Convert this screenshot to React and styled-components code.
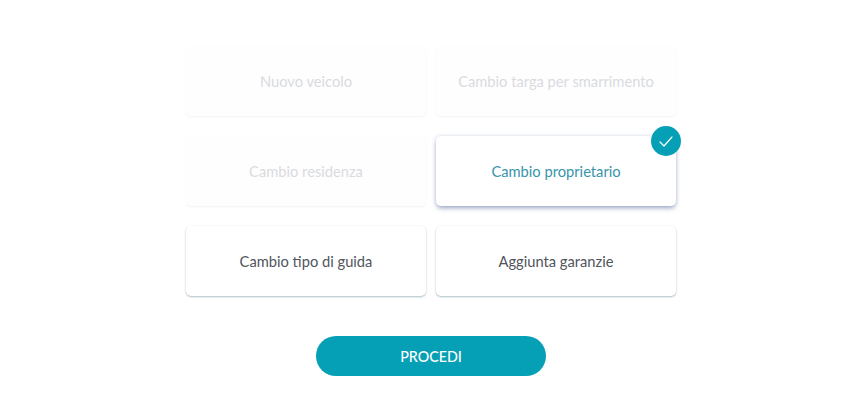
import React from "react";
import styled, { createGlobalStyle } from "styled-components";

const GlobalStyle = createGlobalStyle`
  html, body {
    margin: 0;
    padding: 0;
    background: #fff;
    font-family: Lato, "Open Sans", sans-serif;
  }
`;

const options = [
  { label: "Nuovo veicolo", state: "disabled" },
  { label: "Cambio targa per smarrimento", state: "disabled" },
  { label: "Cambio residenza", state: "disabled" },
  { label: "Cambio proprietario", state: "selected" },
  { label: "Cambio tipo di guida", state: "default" },
  { label: "Aggiunta garanzie", state: "default" },
];

const App = () => {
  return (
    <>
      <GlobalStyle />
      <Page>
        <Grid>
          {options.map((option) => (
            <Card key={option.label} $state={option.state}>
              {option.label}
              {option.state === "selected" && (
                <Badge>
                  <svg width="14" height="11" viewBox="0 0 14 11" fill="none">
                    <path
                      d="M1 6l4 4 8-9"
                      stroke="#fff"
                      strokeWidth="1.2"
                      strokeLinecap="round"
                      strokeLinejoin="round"
                    />
                  </svg>
                </Badge>
              )}
            </Card>
          ))}
        </Grid>
        <Button>PROCEDI</Button>
      </Page>
    </>
  );
};

const Page = styled.div`
  display: flex;
  flex-direction: column;
  align-items: center;
  width: 858px;
  height: 417px;
  padding: 46px 0 0 4px;
  box-sizing: border-box;
`;

const Grid = styled.div`
  display: grid;
  grid-template-columns: 240px 240px;
  grid-auto-rows: 70px;
  column-gap: 10px;
  row-gap: 20px;
`;

const cardShadow = {
  disabled: "0 1px 2px rgba(120, 130, 150, 0.1)",
  selected: "0 3px 5px -1px rgba(75, 95, 150, 0.5), 0 0 4px rgba(75, 95, 150, 0.2)",
  default: "0 1px 2px rgba(80, 115, 140, 0.45), 0 0 1px rgba(80, 115, 140, 0.12)",
};

const cardColor = {
  disabled: "#d9dbdf",
  selected: "#3794ab",
  default: "#50555c",
};

const Card = styled.div`
  position: relative;
  display: flex;
  align-items: center;
  justify-content: center;
  border-radius: 5px;
  background: ${(p) => (p.$state === "disabled" ? "#fefefe" : "#fff")};
  color: ${(p) => cardColor[p.$state]};
  box-shadow: ${(p) => cardShadow[p.$state]};
  font-size: 14.7px;
  padding-bottom: 1px;
  box-sizing: border-box;
`;

const Badge = styled.div`
  position: absolute;
  top: -10px;
  right: -5px;
  display: flex;
  align-items: center;
  justify-content: center;
  width: 30px;
  height: 30px;
  border-radius: 50%;
  background: #05a0b5;
`;

const Button = styled.button`
  width: 230px;
  height: 40px;
  margin-top: 40px;
  border: 0;
  border-radius: 20px;
  background: #05a0b5;
  color: #fff;
  font-family: inherit;
  font-size: 14.3px;
  font-weight: 500;
  cursor: pointer;
`;

export default App;
